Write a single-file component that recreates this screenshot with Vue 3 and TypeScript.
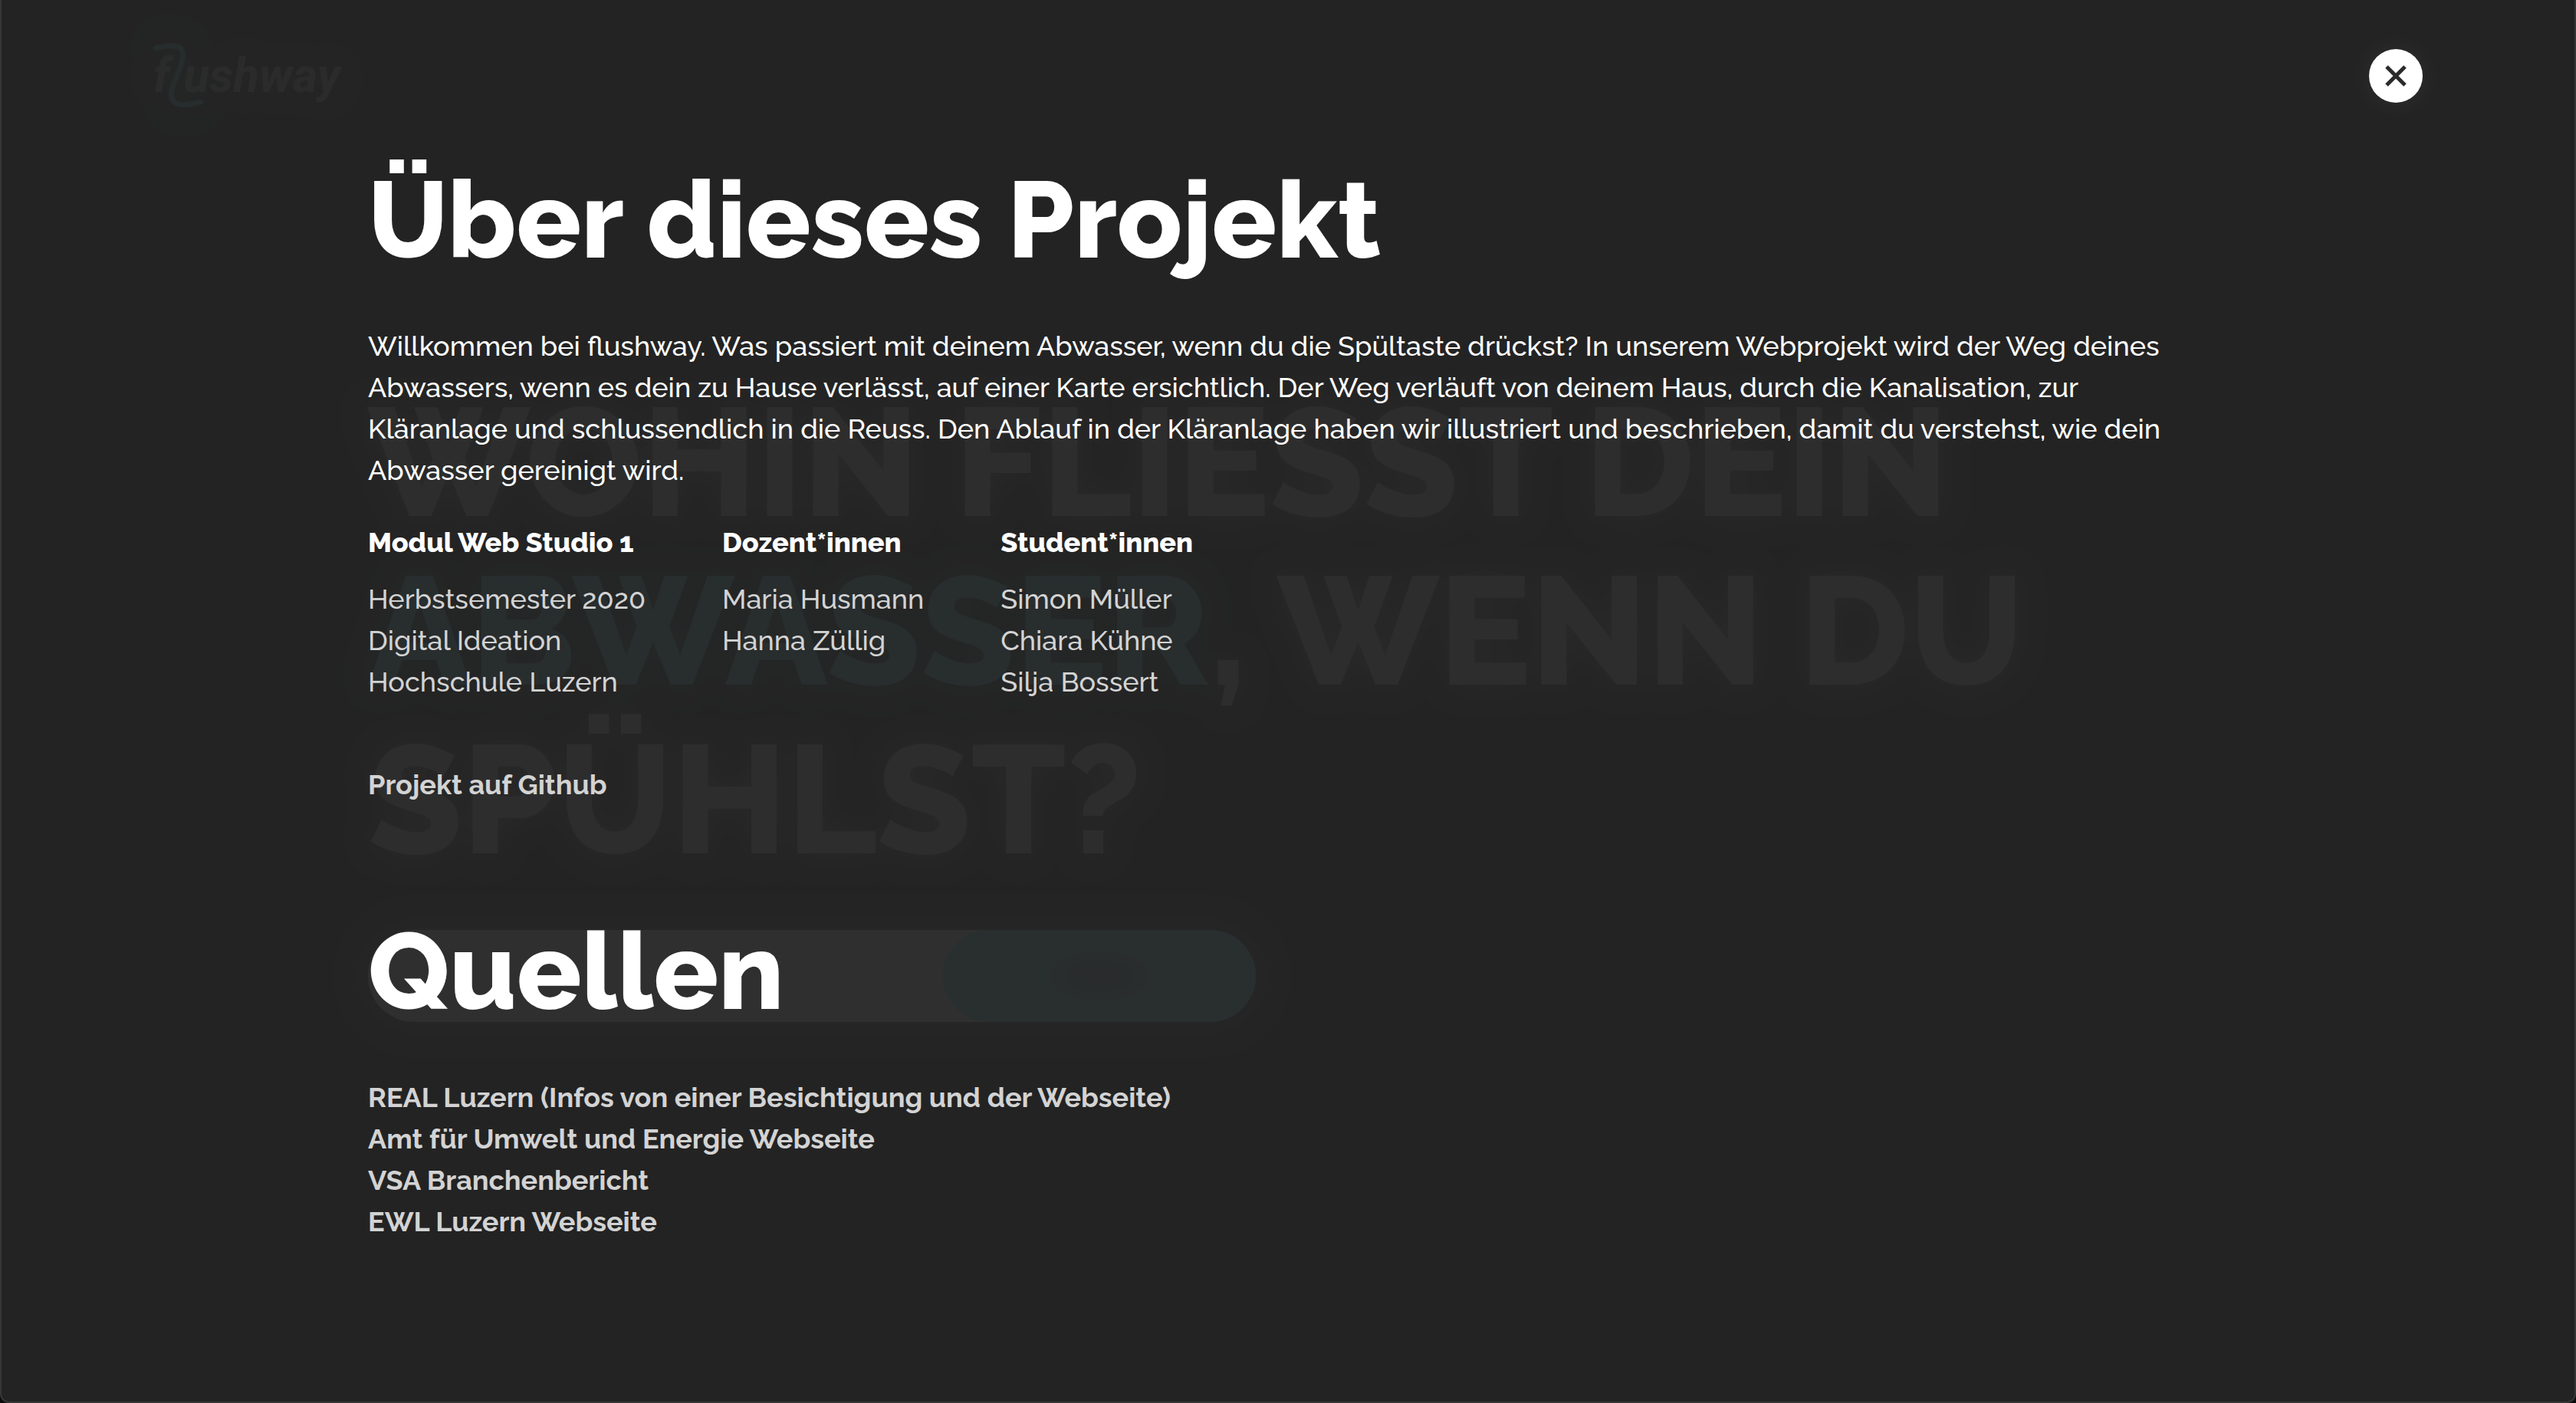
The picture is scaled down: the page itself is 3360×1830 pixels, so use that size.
<script setup lang="ts">
import { ref } from 'vue'

interface Column {
  title: string
  entries: string[]
}

const columns: Column[] = [
  { title: 'Modul Web Studio 1', entries: ['Herbstsemester 2020', 'Digital Ideation', 'Hochschule Luzern'] },
  { title: 'Dozent*innen', entries: ['Maria Husmann', 'Hanna Züllig'] },
  { title: 'Student*innen', entries: ['Simon Müller', 'Chiara Kühne', 'Silja Bossert'] },
]

const sources: string[] = [
  'REAL Luzern (Infos von einer Besichtigung und der Webseite)',
  'Amt für Umwelt und Energie Webseite',
  'VSA Branchenbericht',
  'EWL Luzern Webseite',
]

const open = ref(true)
</script>

<template>
  <div class="app">
    <div class="start" :inert="open" aria-hidden="true">
      <header class="bar">
        <div class="logo">
          <span>f</span>
          <svg class="swoosh" viewBox="0 0 66 84" width="66" height="84">
            <path d="M3 6C15 3 27 2 33 4C41 8 39 20 34 34C29 48 21 60 24 70C27 82 40 81 62 76" />
          </svg>
          <span>ushway</span>
        </div>
      </header>
      <main class="column">
        <p class="question">
          Wohin fliesst dein<br />
          <em>Abwasser</em>, wenn du<br />
          spühlst?
        </p>
        <form class="search" @submit.prevent>
          <input type="text" aria-label="Adresse" />
          <button type="submit" aria-label="Suchen"></button>
        </form>
      </main>
    </div>

    <div v-if="open" class="overlay" role="dialog" aria-labelledby="about-title">
      <header class="bar bar-end">
        <button class="close" type="button" aria-label="Schliessen" @click="open = false">
          <svg viewBox="0 0 28 28" width="28" height="28"><path d="M2 2L26 26M26 2L2 26" /></svg>
        </button>
      </header>
      <article class="column">
        <h1 id="about-title">Über dieses Projekt</h1>
        <p class="intro">
          Willkommen bei flushway. Was passiert mit deinem Abwasser, wenn du die Spültaste drückst? In unserem
          Webprojekt wird der Weg deines Abwassers, wenn es dein zu Hause verlässt, auf einer Karte ersichtlich. Der
          Weg verläuft von deinem Haus, durch die Kanalisation, zur Kläranlage und schlussendlich in die Reuss. Den
          Ablauf in der Kläranlage haben wir illustriert und beschrieben, damit du verstehst, wie dein Abwasser
          gereinigt wird.
        </p>
        <div class="credits">
          <section v-for="c in columns" :key="c.title">
            <h3>{{ c.title }}</h3>
            <ul>
              <li v-for="e in c.entries" :key="e">{{ e }}</li>
            </ul>
          </section>
        </div>
        <p class="github"><a href="#">Projekt auf Github</a></p>
        <h2>Quellen</h2>
        <ul class="sources">
          <li v-for="s in sources" :key="s"><a href="#">{{ s }}</a></li>
        </ul>
      </article>
    </div>
  </div>
</template>

<style>
body {
  margin: 0;
  background: #0c0c0c;
}
</style>

<style scoped>
.app {
  position: relative;
  box-sizing: border-box;
  min-height: 100vh;
  overflow: hidden;
  border-radius: 0 0 12px 12px;
  background: #242424;
  color: #fff;
  font-family: Raleway, Lato, sans-serif;
  font-size: 36px;
  font-weight: 500;
  line-height: 54px;
}

.app::after {
  content: '';
  position: absolute;
  inset: 0;
  border: 2px solid #363636;
  border-top: 0;
  border-radius: 0 0 12px 12px;
  pointer-events: none;
}

h1,
h2,
h3,
p,
ul {
  margin: 0;
  padding: 0;
}

ul {
  list-style: none;
}

.bar {
  display: flex;
  align-items: center;
  height: 70px;
  padding: 64px 200px 0;
}

.bar-end {
  justify-content: flex-end;
}

.column {
  max-width: 2400px;
  margin: 0 auto;
}

/* Start page, seen faintly through the overlay */
.start {
  position: absolute;
  inset: 0;
}

.logo {
  display: flex;
  align-items: center;
  color: #b4b4b4;
  font-family: Roboto, sans-serif;
  font-size: 62px;
  font-style: italic;
  font-weight: 700;
  text-shadow: 0 0 40px rgba(255, 255, 255, 0.3);
}

.swoosh {
  margin: 0 -26px 0 -22px;
  overflow: visible;
  filter: drop-shadow(0 0 20px #2f8a98);
}

.swoosh path {
  fill: none;
  stroke: #66b8cc;
  stroke-width: 7;
  stroke-linecap: round;
}

.question {
  margin-top: 359px;
  color: #d0d0d0;
  font-size: 200px;
  font-weight: 800;
  line-height: 220px;
  text-transform: uppercase;
  text-shadow: 0 0 40px rgba(255, 255, 255, 0.5);
}

.question em {
  color: #78d2dc;
  font-style: normal;
  text-shadow: 0 0 40px rgba(100, 215, 225, 0.5);
}

.search {
  display: flex;
  justify-content: flex-end;
  width: 1158px;
  height: 120px;
  margin-top: 60px;
  border-radius: 60px;
  background: #f4f4f4;
  box-shadow: 0 0 50px rgba(255, 255, 255, 0.4);
}

.search input {
  flex: 1;
  min-width: 0;
  margin: 0;
  padding: 0 60px;
  border: 0;
  background: transparent;
}

.search button {
  width: 408px;
  border: 0;
  border-radius: 60px;
  background: radial-gradient(ellipse 70px 34px, #80b0b8 20%, #84e0ea 100%);
}

.overlay {
  position: relative;
  box-sizing: border-box;
  min-height: 100vh;
  background: rgba(36, 36, 36, 0.95);
}

.close {
  display: flex;
  align-items: center;
  justify-content: center;
  width: 70px;
  height: 70px;
  padding: 0;
  border: 0;
  border-radius: 50%;
  background: #fff;
  box-shadow: 0 0 40px rgba(255, 255, 255, 0.06);
  cursor: pointer;
}

.close path {
  fill: none;
  stroke: #2b2b2b;
  stroke-width: 5;
}

h1,
h2 {
  font-size: 140px;
  font-weight: 800;
  line-height: 160px;
}

h1 {
  margin-top: 73px;
}

h2 {
  margin-top: 137px;
}

.intro,
.sources {
  margin-top: 57px;
}

.credits {
  display: flex;
  gap: 100px;
  margin-top: 40px;
}

h3 {
  margin-bottom: 20px;
  font-size: 36px;
  font-weight: 800;
  line-height: 54px;
}

.credits ul {
  color: #d3d3d3;
}

.github {
  margin-top: 80px;
}

a {
  color: #d3d3d3;
  font-weight: 700;
  text-decoration: none;
}
</style>
